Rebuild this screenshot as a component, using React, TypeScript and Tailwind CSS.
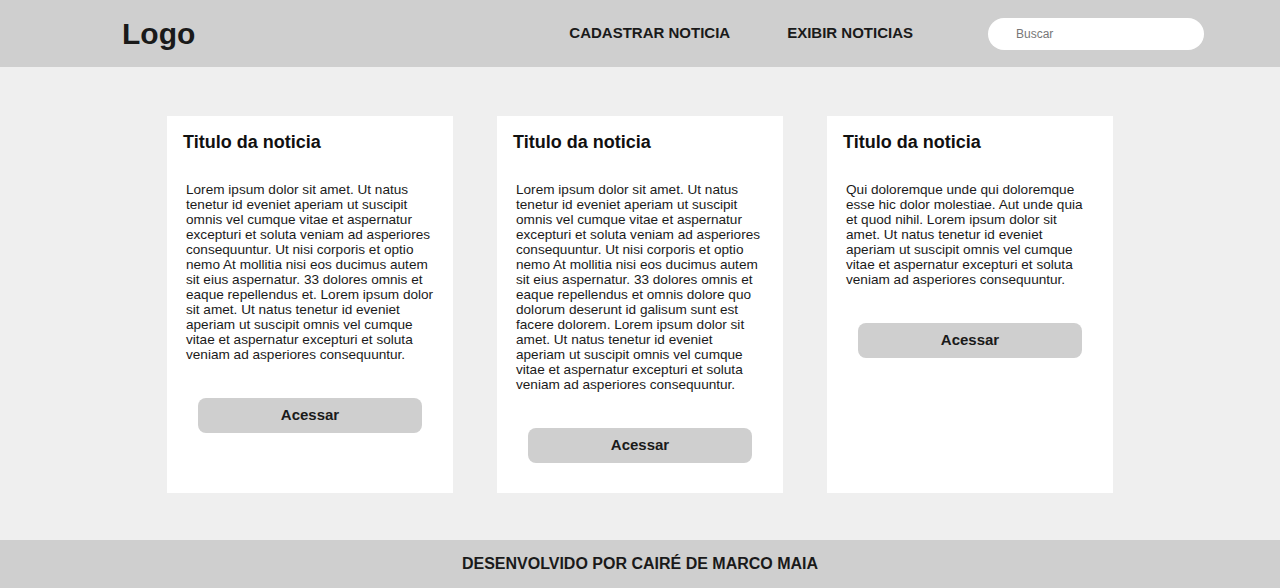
const noticias = [
  {
    titulo: 'Titulo da noticia',
    texto:
      'Lorem ipsum dolor sit amet. Ut natus tenetur id eveniet aperiam ut suscipit omnis vel cumque vitae et aspernatur excepturi et soluta veniam ad asperiores consequuntur. Ut nisi corporis et optio nemo At mollitia nisi eos ducimus autem sit eius aspernatur. 33 dolores omnis et eaque repellendus et. Lorem ipsum dolor sit amet. Ut natus tenetur id eveniet aperiam ut suscipit omnis vel cumque vitae et aspernatur excepturi et soluta veniam ad asperiores consequuntur.',
  },
  {
    titulo: 'Titulo da noticia',
    texto:
      'Lorem ipsum dolor sit amet. Ut natus tenetur id eveniet aperiam ut suscipit omnis vel cumque vitae et aspernatur excepturi et soluta veniam ad asperiores consequuntur. Ut nisi corporis et optio nemo At mollitia nisi eos ducimus autem sit eius aspernatur. 33 dolores omnis et eaque repellendus et omnis dolore quo dolorum deserunt id galisum sunt est facere dolorem. Lorem ipsum dolor sit amet. Ut natus tenetur id eveniet aperiam ut suscipit omnis vel cumque vitae et aspernatur excepturi et soluta veniam ad asperiores consequuntur.',
  },
  {
    titulo: 'Titulo da noticia',
    texto:
      'Qui doloremque unde qui doloremque esse hic dolor molestiae. Aut unde quia et quod nihil. Lorem ipsum dolor sit amet. Ut natus tenetur id eveniet aperiam ut suscipit omnis vel cumque vitae et aspernatur excepturi et soluta veniam ad asperiores consequuntur.',
  },
]

function Header() {
  return (
    <header className="h-[67px] bg-[#cfcfcf] flex items-center justify-between pl-[122px] pr-[76px]">
      <span className="text-[30px] font-bold text-[#1a1a1a] leading-none">Logo</span>
      <div className="flex items-center">
        <nav className="flex items-center gap-[57px] text-[15px] font-bold text-[#1a1a1a]">
          <a href="#">CADASTRAR NOTICIA</a>
          <a href="#">EXIBIR NOTICIAS</a>
        </nav>
        <input
          type="text"
          placeholder="Buscar"
          className="ml-[75px] w-[216px] h-[32px] rounded-full bg-white pl-[28px] text-[12px] text-[#333] placeholder:text-[#777] outline-none"
        />
      </div>
    </header>
  )
}

function Card({ titulo, texto }: { titulo: string; texto: string }) {
  return (
    <div className="w-[286px] h-[377px] bg-white pt-[15px]">
      <h2 className="px-[16px] text-[18px] font-semibold leading-[22px] text-[#111]">{titulo}</h2>
      <p className="mt-[29px] pl-[19px] pr-[19px] text-[13.6px] leading-[15px] text-[#1a1a1a]">{texto}</p>
      <div className="mt-[36px] flex justify-center">
        <button
          type="button"
          className="w-[224px] h-[35px] rounded-[8px] bg-[#cfcfcf] text-[15px] font-bold text-[#1a1a1a]"
        >
          Acessar
        </button>
      </div>
    </div>
  )
}

export default function App() {
  return (
    <div className="w-[1280px] h-[588px] bg-[#efefef] flex flex-col" style={{ fontFamily: '"Liberation Sans", Arial, sans-serif' }}>
      <Header />
      <main className="flex-1 flex justify-center gap-[44px] pt-[49px]">
        {noticias.map((n, i) => (
          <Card key={i} titulo={n.titulo} texto={n.texto} />
        ))}
      </main>
      <footer className="h-[48px] bg-[#cfcfcf] flex items-center justify-center">
        <span className="text-[16px] font-bold text-[#1a1a1a]">DESENVOLVIDO POR CAIRÉ DE MARCO MAIA</span>
      </footer>
    </div>
  )
}
